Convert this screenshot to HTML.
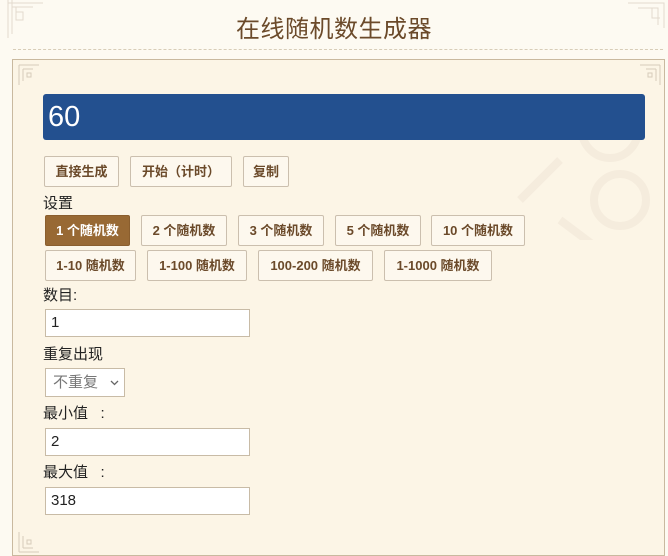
<!DOCTYPE html>
<html><head><meta charset="utf-8"><style>
*{margin:0;padding:0;box-sizing:border-box}
body{width:668px;height:556px;background:#fdfaf2;font-family:"Liberation Sans","Noto Sans CJK SC",sans-serif;position:relative;overflow:hidden;color:#222}
.a{position:absolute}
h1{position:absolute;left:0;width:668px;top:9px;text-align:center;font-size:24px;font-weight:normal;color:#6b4a2a;letter-spacing:0.5px}
.dash{left:13px;width:650px;top:49px;border-top:1px dashed #d8cdb8}
.panel{left:12px;top:59px;width:653px;height:497px;border:1px solid #c9b99f;background:#fcf5e6}
.bar{left:43px;top:94px;width:602px;height:46px;background:#23508f;border-radius:3px;color:#fff;font-size:29px;padding-left:5px;line-height:46px}
.b{position:absolute;height:31px;border:1px solid #cbbfae;background:#fdf8ee;border-radius:2px;font-size:13px;font-weight:bold;color:#6b4a2a;text-align:center;line-height:29px}
.sel{background:#986934;color:#fff;border-color:#8a5e2e}
.l{position:absolute;left:43px;font-size:15px;color:#222}
.in{position:absolute;left:45px;width:205px;height:28px;border:1px solid #c8bba6;background:#fff;font-size:15px;padding-left:5px;line-height:26px}
svg.c{position:absolute}
</style></head><body>
<svg class="c" style="left:3px;top:0" width="42" height="42"><g fill="none" stroke="#e2dace" stroke-width="1"><path d="M5 0V38M9 0V34M5 3H40M9 7H30M13 7V20H20V12H13"/></g></svg>
<svg class="c" style="left:628px;top:0" width="40" height="30"><g fill="none" stroke="#e2dace"><path d="M0 3H36V28M10 8H30V25M24 8V18H32"/></g></svg>
<h1>在线随机数生成器</h1>
<div class="a dash"></div>
<div class="a panel"></div>
<svg class="c" style="left:500px;top:60px" width="164" height="180"><g fill="none" stroke="#f5ecdd" stroke-width="8"><circle cx="110" cy="70" r="28"/><circle cx="120" cy="140" r="26"/><path d="M20 140L60 100M60 160L100 190"/></g></svg>
<svg class="c" style="left:17px;top:63px" width="26" height="26"><g fill="none" stroke="#d6ccba"><path d="M2 2H22M2 2V22M6 6H16M6 6V18M10 10H14V14H10Z"/></g></svg>
<svg class="c" style="left:636px;top:63px" width="26" height="26"><g fill="none" stroke="#d6ccba"><path d="M24 2H4M24 2V22M20 6H10M20 6V18M12 10H16V14H12Z"/></g></svg>
<svg class="c" style="left:17px;top:528px" width="26" height="26"><g fill="none" stroke="#d6ccba"><path d="M2 24H22M2 24V4M6 20H16M6 20V8M10 12H14V16H10Z"/></g></svg>
<div class="a bar">60</div>
<div class="b" style="left:44px;top:156px;width:75px">直接生成</div>
<div class="b" style="left:130px;top:156px;width:102px">开始（计时）</div>
<div class="b" style="left:243px;top:156px;width:46px">复制</div>
<div class="l" style="top:192px">设置</div>
<div class="b sel" style="left:45px;top:215px;width:85px">1 个随机数</div>
<div class="b" style="left:141px;top:215px;width:86px">2 个随机数</div>
<div class="b" style="left:238px;top:215px;width:86px">3 个随机数</div>
<div class="b" style="left:335px;top:215px;width:86px">5 个随机数</div>
<div class="b" style="left:431px;top:215px;width:94px">10 个随机数</div>
<div class="b" style="left:45px;top:250px;width:91px">1-10 随机数</div>
<div class="b" style="left:147px;top:250px;width:100px">1-100 随机数</div>
<div class="b" style="left:258px;top:250px;width:115px">100-200 随机数</div>
<div class="b" style="left:384px;top:250px;width:108px">1-1000 随机数</div>
<div class="l" style="top:284px">数目:</div>
<div class="in" style="top:309px">1</div>
<div class="l" style="top:343px">重复出现</div>
<div class="a" style="left:45px;top:368px;width:80px;height:29px;border:1px solid #c8bba6;background:#fff;font-size:15px;color:#777;padding-left:7px;line-height:27px">不重复<svg style="position:absolute;left:64px;top:11px" width="9" height="6"><path d="M1 1L4.5 4.5L8 1" fill="none" stroke="#666" stroke-width="1.3"/></svg></div>
<div class="l" style="top:402px">最小值&nbsp;&nbsp;&nbsp;:</div>
<div class="in" style="top:428px">2</div>
<div class="l" style="top:461px">最大值&nbsp;&nbsp;&nbsp;:</div>
<div class="in" style="top:487px">318</div>
</body></html>
